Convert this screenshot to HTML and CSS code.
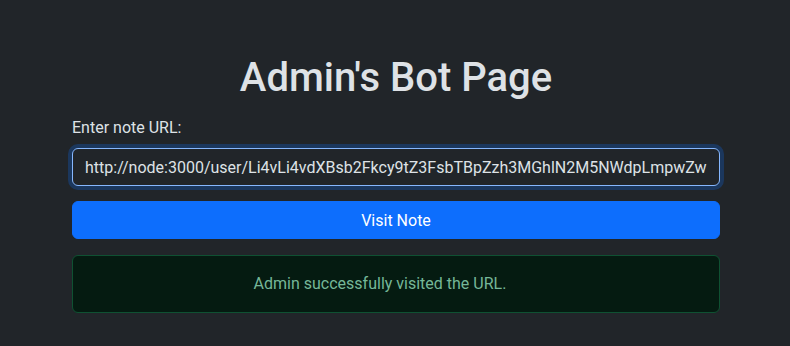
FILE: index.html
```html
<html>

<head>
    <link rel="stylesheet" href="styles.css">
</head>

<body>
    <div class="container">
        <h1 class="title">Admin's Bot Page</h1>
        <form class="bot-form" onsubmit="return false">
            <label class="form-label" for="url">Enter note URL:</label>
            <input class="form-control" type="text" id="url" name="url"
                value="http://node:3000/user/Li4vLi4vdXBsb2Fkcy9tZ3FsbTBpZzh3MGhlN2M5NWdpLmpwZw==">
            <button class="btn-visit" type="submit">Visit Note</button>
        </form>
        <div class="alert-success">Admin successfully visited the URL.</div>
    </div>
    <script>
        document.getElementById('url').focus();
    </script>
</body>

</html>
```

FILE: styles.css
```css
body {
    margin: 0;
    background-color: #212529;
    color: #dee2e6;
    font-family: Roboto, "Liberation Sans", sans-serif;
    font-size: 16px;
    line-height: 1.5;
}

.container {
    width: 648px;
    margin: 0 auto;
    padding: 54px 0 0 2px;
}

.title {
    margin: 0 0 14px;
    font-size: 40px;
    font-weight: 500;
    line-height: 1.2;
    text-align: center;
}

.bot-form {
    display: flex;
    flex-direction: column;
    margin: 0;
}

.form-label {
    margin-bottom: 8px;
}

.form-control {
    height: 38px;
    padding: 6px 12px;
    font-family: inherit;
    font-size: 16px;
    color: #dee2e6;
    background-color: #212529;
    border: 1px solid #86b7fe;
    border-radius: 6px;
    outline: 0;
    box-shadow: 0 0 0 4px rgba(13, 110, 253, .25);
    box-sizing: border-box;
}

.btn-visit {
    margin-top: 15px;
    height: 38px;
    font-family: inherit;
    font-size: 16px;
    color: #fff;
    background-color: #0d6efd;
    border: 1px solid #0d6efd;
    border-radius: 6px;
    cursor: pointer;
}

.alert-success {
    margin-top: 16px;
    padding: 16px 48px 16px 16px;
    color: #75b798;
    background-color: #051b11;
    border: 1px solid #0f5132;
    border-radius: 6px;
    text-align: center;
}
```
